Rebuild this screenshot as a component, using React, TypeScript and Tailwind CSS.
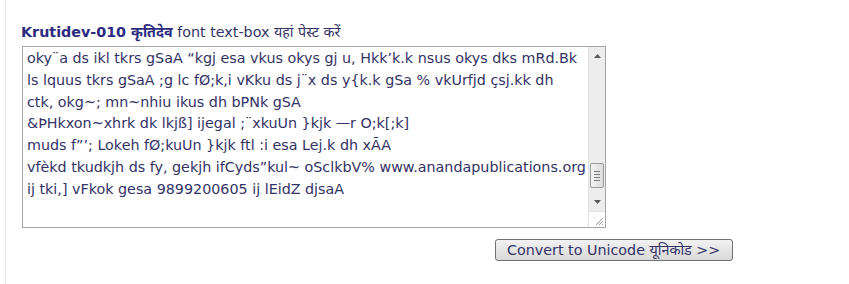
import React from 'react';

const LINES = [
  'oky¨a ds ikl tkrs gSaA “kgj esa vkus okys gj u, Hkk’k.k nsus okys dks mRd.Bk',
  'ls lquus tkrs gSaA ;g lc fØ;k,i vKku ds j¨x ds y{k.k gSa % vkUrfjd çsj.kk dh',
  'ctk, okg~; mn~nhiu ikus dh bPNk gSA',
  '&ÞHkxon~xhrk dk lkjß] ijegal ;¨xkuUn }kjk —r O;k[;k]',
  'muds f”’; Lokeh fØ;kuUn }kjk ftl :i esa Lej.k dh xÃA',
  'vfèkd tkudkjh ds fy, gekjh ifCyds”kul~ oSclkbV% www.anandapublications.org',
  'ij tki,] vFkok gesa 9899200605 ij lEidZ djsaA',
];

const font = { fontFamily: '"DejaVu Sans", Verdana, "Noto Sans", sans-serif' };

const Scrollbar: React.FC = () => (
  <div className="flex flex-col w-[17px] shrink-0 bg-white">
    <div className="flex-1 flex flex-col bg-[#ededed] border-l border-[#e2e2e2]">
      <div className="h-[18px] flex items-center justify-center">
        <svg width="7" height="4" viewBox="0 0 7 4"><path d="M0 4 L3.5 0 L7 4 Z" fill="#5a5a5a" /></svg>
      </div>
      <div className="flex-1 flex flex-col justify-end pb-[5px]">
        <div className="mx-[1px] h-[25px] rounded-[2px] border border-[#9a9a9a] bg-gradient-to-r from-[#f4f4f4] to-[#dcdcdc] flex flex-col items-center justify-center gap-[2px]">
          <div className="w-[6px] h-px bg-[#7a7a7a]" />
          <div className="w-[6px] h-px bg-[#7a7a7a]" />
          <div className="w-[6px] h-px bg-[#7a7a7a]" />
          <div className="w-[6px] h-px bg-[#7a7a7a]" />
        </div>
      </div>
      <div className="h-[18px] flex items-center justify-center">
        <svg width="7" height="4" viewBox="0 0 7 4"><path d="M0 0 L3.5 4 L7 0 Z" fill="#5a5a5a" /></svg>
      </div>
    </div>
    <div className="h-[16px] flex items-end justify-end pr-[2px] pb-[2px] border-t border-l border-[#e2e2e2]">
      <svg width="8" height="8" viewBox="0 0 8 8">
        <path d="M1 8 L8 1 M4 8 L8 4 M7 8 L8 7" stroke="#9a9a9a" strokeWidth="1" />
      </svg>
    </div>
  </div>
);

const App: React.FC = () => {
  return (
    <div className="w-[849px] h-[284px] bg-white flex" style={font}>
      <div className="ml-[5px] w-px bg-[#e6e6e6] h-full" />
      <div className="pl-[15px] pt-[24px] flex flex-col">
        <div className="text-[14.3px] leading-[17px] text-[#333366] whitespace-nowrap">
          <span className="font-bold text-[#2b2b80]">Krutidev-010 कृतिदेव</span> font text-box यहां पेस्ट करें
        </div>

        {/* text-box */}
        <div className="mt-[5px] ml-[1px] w-[584px] h-[182px] border border-[#a6a6a6] flex bg-white">
          <div className="flex-1 pl-[4px] pt-[1px] text-[14.3px] leading-[21.8px] text-[#333366] overflow-hidden">
            {LINES.map((l, i) => (
              <div key={i} className="whitespace-nowrap">{l}</div>
            ))}
          </div>
          <Scrollbar />
        </div>

        <div className="flex justify-end mt-[11px] w-[712px]">
          <button className="h-[22px] w-[238px] rounded-[3px] border border-[#707070] bg-gradient-to-b from-[#f2f2f2] to-[#d9d9d9] text-[14.3px] leading-[16px] text-[#333366] pl-[11px] text-left whitespace-nowrap">
            Convert to Unicode यूनिकोड &gt;&gt;
          </button>
        </div>
      </div>
    </div>
  );
};

export default App;
